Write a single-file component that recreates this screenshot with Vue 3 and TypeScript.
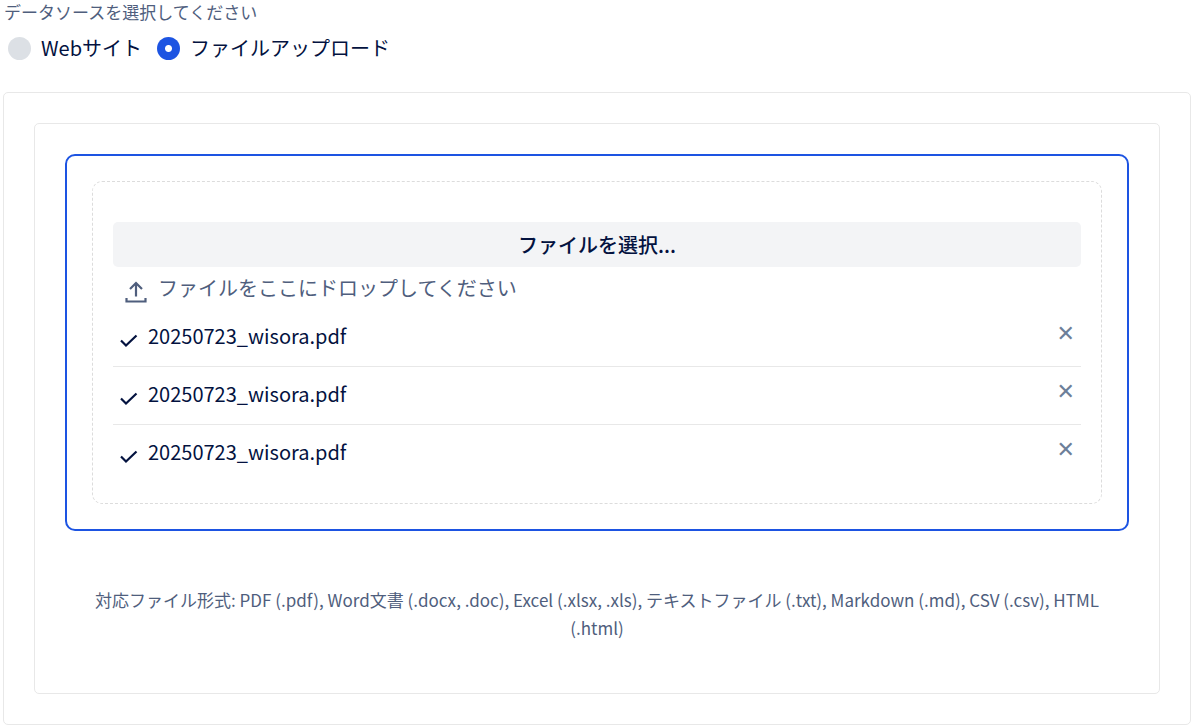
<script setup lang="ts">
import { ref } from 'vue'

interface UploadedFile {
  id: number
  name: string
}

const source = ref<'web' | 'file'>('file')
const files = ref<UploadedFile[]>([
  { id: 1, name: '20250723_wisora.pdf' },
  { id: 2, name: '20250723_wisora.pdf' },
  { id: 3, name: '20250723_wisora.pdf' },
])
const picker = ref<HTMLInputElement | null>(null)

function addFiles(list: FileList | null | undefined) {
  for (const file of Array.from(list ?? [])) {
    files.value.push({ id: Date.now() + files.value.length, name: file.name })
  }
}

function removeFile(id: number) {
  files.value = files.value.filter((file) => file.id !== id)
}
</script>

<template>
  <main class="page">
    <fieldset class="source">
      <legend class="source-title">データソースを選択してください</legend>
      <div class="options">
        <label class="option"><input v-model="source" type="radio" name="source" value="web" />Webサイト</label>
        <label class="option"><input v-model="source" type="radio" name="source" value="file" />ファイルアップロード</label>
      </div>
    </fieldset>

    <section class="panel">
      <div class="panel">
        <div class="upload">
          <div class="dropzone" @dragover.prevent @drop.prevent="addFiles($event.dataTransfer?.files)">
            <button class="choose" type="button" @click="picker?.click()">ファイルを選択...</button>
            <input ref="picker" type="file" multiple hidden aria-label="ファイルを選択" @change="addFiles(picker?.files)" />
            <div class="hint">
              <svg class="upload-icon" viewBox="0 0 22 22" aria-hidden="true">
                <path d="M11 15.500V2.500M5 8l6-6 6 6" stroke-width="2.2" />
                <path d="M1.500 17v3.500h19V17" stroke-width="2.2" />
              </svg>
              <span>ファイルをここにドロップしてください</span>
            </div>
            <ul class="files">
              <li v-for="file in files" :key="file.id" class="file">
                <svg class="check" viewBox="0 0 18 18" aria-hidden="true">
                  <path d="M1 9.5l5 5L16.5 4.5" stroke-width="2.2" />
                </svg>
                <span class="name">{{ file.name }}</span>
                <button class="remove" type="button" aria-label="削除" @click="removeFile(file.id)">✕</button>
              </li>
            </ul>
          </div>
        </div>
        <p class="formats">
          対応ファイル形式: PDF (.pdf), Word文書 (.docx, .doc), Excel (.xlsx, .xls), テキストファイル (.txt), Markdown (.md), CSV (.csv), HTML (.html)
        </p>
      </div>
    </section>
  </main>
</template>

<style>
body {
  margin: 0;
  background: #fff;
}
</style>

<style scoped>
.page {
  padding: 0 3px 1px;
  font-family: "Noto Sans CJK JP", sans-serif;
  font-size: 20px;
  line-height: 28px;
  color: #03123f;
}
.source {
  margin: 0;
  padding: 0 0 28px;
  border: 0;
  min-width: 0;
}
.source-title {
  padding: 0 1px;
  font-size: 17px;
  line-height: 24px;
  color: #4f5e7d;
}
.options {
  display: flex;
  gap: 15px;
  padding: 10px 5px 2px;
}
.option {
  display: flex;
  align-items: center;
  gap: 10px;
}
.option input {
  appearance: none;
  width: 23px;
  height: 23px;
  margin: 0;
  border-radius: 50%;
  background: #dce0e5;
}
.option input:checked {
  background: radial-gradient(circle, #fff 3px, #1d54e2 4px);
}
.panel {
  padding: 30px;
  border: 1px solid #e8e8e8;
  border-radius: 5px;
}
.upload {
  padding: 25px;
  border: 2px solid #1d54e2;
  border-radius: 10px;
}
.dropzone {
  padding: 40px 20px 21px;
  border: 1px dashed #dcdcdc;
  border-radius: 10px;
}
.choose {
  display: block;
  width: 100%;
  height: 45px;
  padding: 0;
  border: 0;
  border-radius: 5px;
  background: #f3f4f6;
  color: inherit;
  font: inherit;
  font-weight: 500;
}
.hint {
  display: flex;
  align-items: center;
  gap: 11px;
  height: 42px;
  padding-left: 12px;
  color: #4f5e7d;
}
.upload-icon {
  width: 22px;
  height: 22px;
  padding-top: 8px;
}
svg {
  flex: none;
  fill: none;
  stroke: currentColor;
}
.files {
  margin: 0;
  padding: 0;
  list-style: none;
}
.file {
  display: flex;
  align-items: center;
  gap: 10px;
  height: 57px;
  padding: 0 6px 0 7px;
}
.file + .file {
  border-top: 1px solid #e8e8e8;
}
.check {
  width: 18px;
  height: 18px;
  padding-top: 5px;
}
.name {
  flex: 1;
  padding-bottom: 4px;
}
.remove {
  padding: 0 0 7px;
  border: 0;
  background: none;
  color: #6d7f99;
  font: 22px/24px "DejaVu Sans", sans-serif;
}
.formats {
  margin: 55px 10px 21px;
  font-size: 17px;
  color: #4f5e7d;
  text-align: center;
}
</style>
